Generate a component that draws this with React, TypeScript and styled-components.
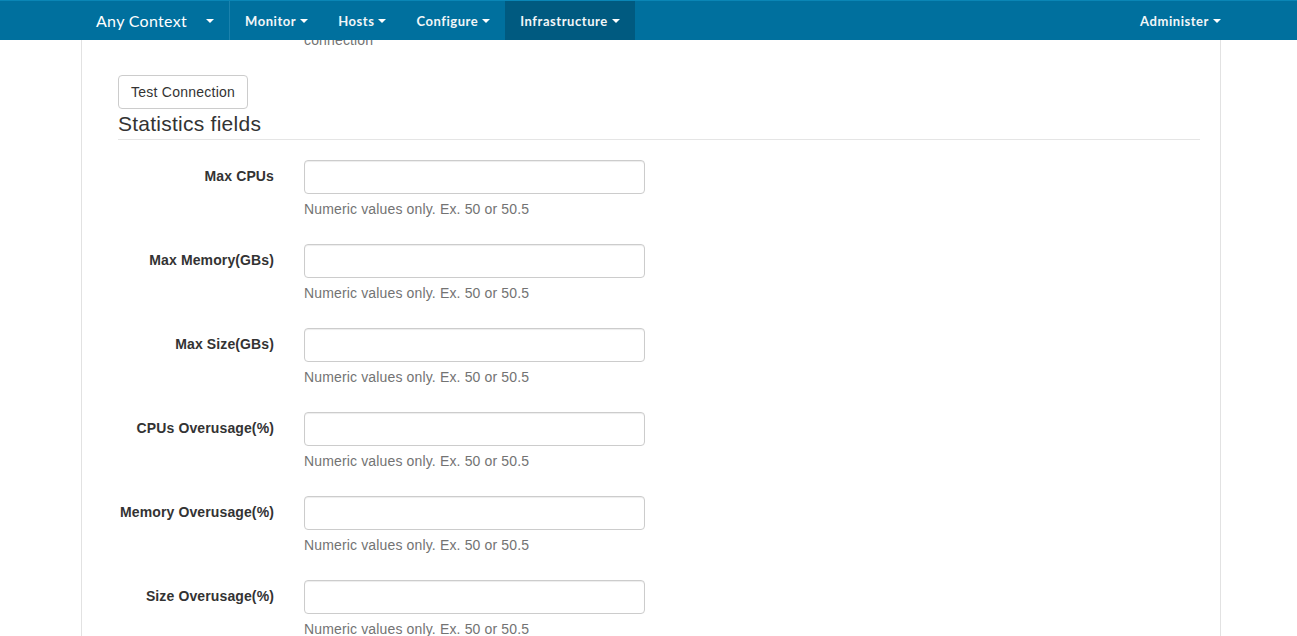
import React from "react";
import styled, { createGlobalStyle } from "styled-components";

const GlobalStyle = createGlobalStyle`
  html, body {
    margin: 0;
    padding: 0;
    background: #fff;
    font-family: "Liberation Sans", Arial, sans-serif;
    font-size: 14px;
    line-height: 20px;
    letter-spacing: 0.12px;
    color: #333;
    overflow: hidden;
  }
  * { box-sizing: border-box; }
`;

const Navbar = styled.nav`
  position: fixed;
  top: 0;
  left: 0;
  right: 0;
  height: 40px;
  background: #00709e;
  border-top: 1px solid #0a86b6;
  z-index: 10;
`;

const NavInner = styled.div`
  width: 1140px;
  margin-left: 81px;
  height: 100%;
  display: flex;
  align-items: stretch;
`;

const Brand = styled.div`
  width: 149px;
  display: flex;
  align-items: center;
  justify-content: space-between;
  padding: 0 15px;
  border-right: 1px solid #1b82ad;
  color: #fff;
  font-family: Lato, "Open Sans", sans-serif;
  font-size: 16px;
  font-weight: 400;
  letter-spacing: 0.3px;
`;

const NavList = styled.ul<{ $right?: boolean }>`
  list-style: none;
  margin: 0;
  margin-left: ${(p) => (p.$right ? "auto" : "0")};
  margin-right: ${(p) => (p.$right ? "-15px" : "0")};
  padding: 0;
  display: flex;
`;

const NavItem = styled.li<{ $active?: boolean }>`
  display: flex;
  align-items: center;
  padding: 0 15px;
  background: ${(p) => (p.$active ? "#005a80" : "transparent")};
  color: #f2f6f8;
  font-family: Lato, "Open Sans", sans-serif;
  font-size: 13px;
  font-weight: 700;
  letter-spacing: 0.55px;
`;

const Caret = styled.span<{ $gap?: number }>`
  display: inline-block;
  width: 0;
  height: 0;
  margin-left: ${(p) => p.$gap ?? 4}px;
  border-left: 4px solid transparent;
  border-right: 4px solid transparent;
  border-top: 4px solid #fff;
`;

const Container = styled.div`
  width: 1140px;
  margin-left: 81px;
  min-height: 100vh;
  border-left: 1px solid #e2e2e2;
  border-right: 1px solid #e2e2e2;
  padding: 30px 20px 0 36px;
`;

const Help = styled.div`
  color: #737373;
  font-size: 14px;
  line-height: 20px;
  letter-spacing: 0.15px;
  margin-top: 5px;
  margin-bottom: 10px;
`;

const TopHelp = styled(Help)`
  margin-top: 0;
  padding-left: 186px;
`;

const ButtonGroup = styled.div`
  margin-top: 25px;
`;

const Button = styled.button`
  height: 34px;
  padding: 6px 12px;
  border: 1px solid #ccc;
  border-radius: 4px;
  background: #fff;
  color: #333;
  font-family: "Liberation Sans", Arial, sans-serif;
  font-size: 14px;
  line-height: 20px;
  letter-spacing: 0.25px;
`;

const Legend = styled.div`
  font-size: 21px;
  line-height: 30px;
  letter-spacing: 0.25px;
  color: #333;
  border-bottom: 1px solid #e5e5e5;
  margin-bottom: 20px;
`;

const FormGroup = styled.div`
  display: grid;
  grid-template-columns: 156px 341px;
  column-gap: 30px;
  margin-bottom: 15px;
`;

const Label = styled.label`
  text-align: right;
  font-weight: 700;
  padding-top: 6px;
  color: #333;
`;

const Input = styled.input`
  display: block;
  width: 100%;
  height: 34px;
  border: 1px solid #ccc;
  border-radius: 4px;
  padding: 6px 12px;
  box-shadow: inset 0 1px 1px rgba(0, 0, 0, 0.075);
  font-size: 14px;
`;

const fields = [
  "Max CPUs",
  "Max Memory(GBs)",
  "Max Size(GBs)",
  "CPUs Overusage(%)",
  "Memory Overusage(%)",
  "Size Overusage(%)",
];

export default function App() {
  return (
    <>
      <GlobalStyle />
      <Navbar>
        <NavInner>
          <Brand>
            Any Context
            <Caret />
          </Brand>
          <NavList>
            <NavItem>
              Monitor
              <Caret />
            </NavItem>
            <NavItem>
              Hosts
              <Caret />
            </NavItem>
            <NavItem>
              Configure
              <Caret />
            </NavItem>
            <NavItem $active>
              Infrastructure
              <Caret />
            </NavItem>
          </NavList>
          <NavList $right>
            <NavItem>
              Administer
              <Caret />
            </NavItem>
          </NavList>
        </NavInner>
      </Navbar>
      <Container>
        <TopHelp>connection</TopHelp>
        <ButtonGroup>
          <Button type="button">Test Connection</Button>
        </ButtonGroup>
        <Legend>Statistics fields</Legend>
        {fields.map((f) => (
          <FormGroup key={f}>
            <Label>{f}</Label>
            <div>
              <Input type="text" />
              <Help>Numeric values only. Ex. 50 or 50.5</Help>
            </div>
          </FormGroup>
        ))}
      </Container>
    </>
  );
}
